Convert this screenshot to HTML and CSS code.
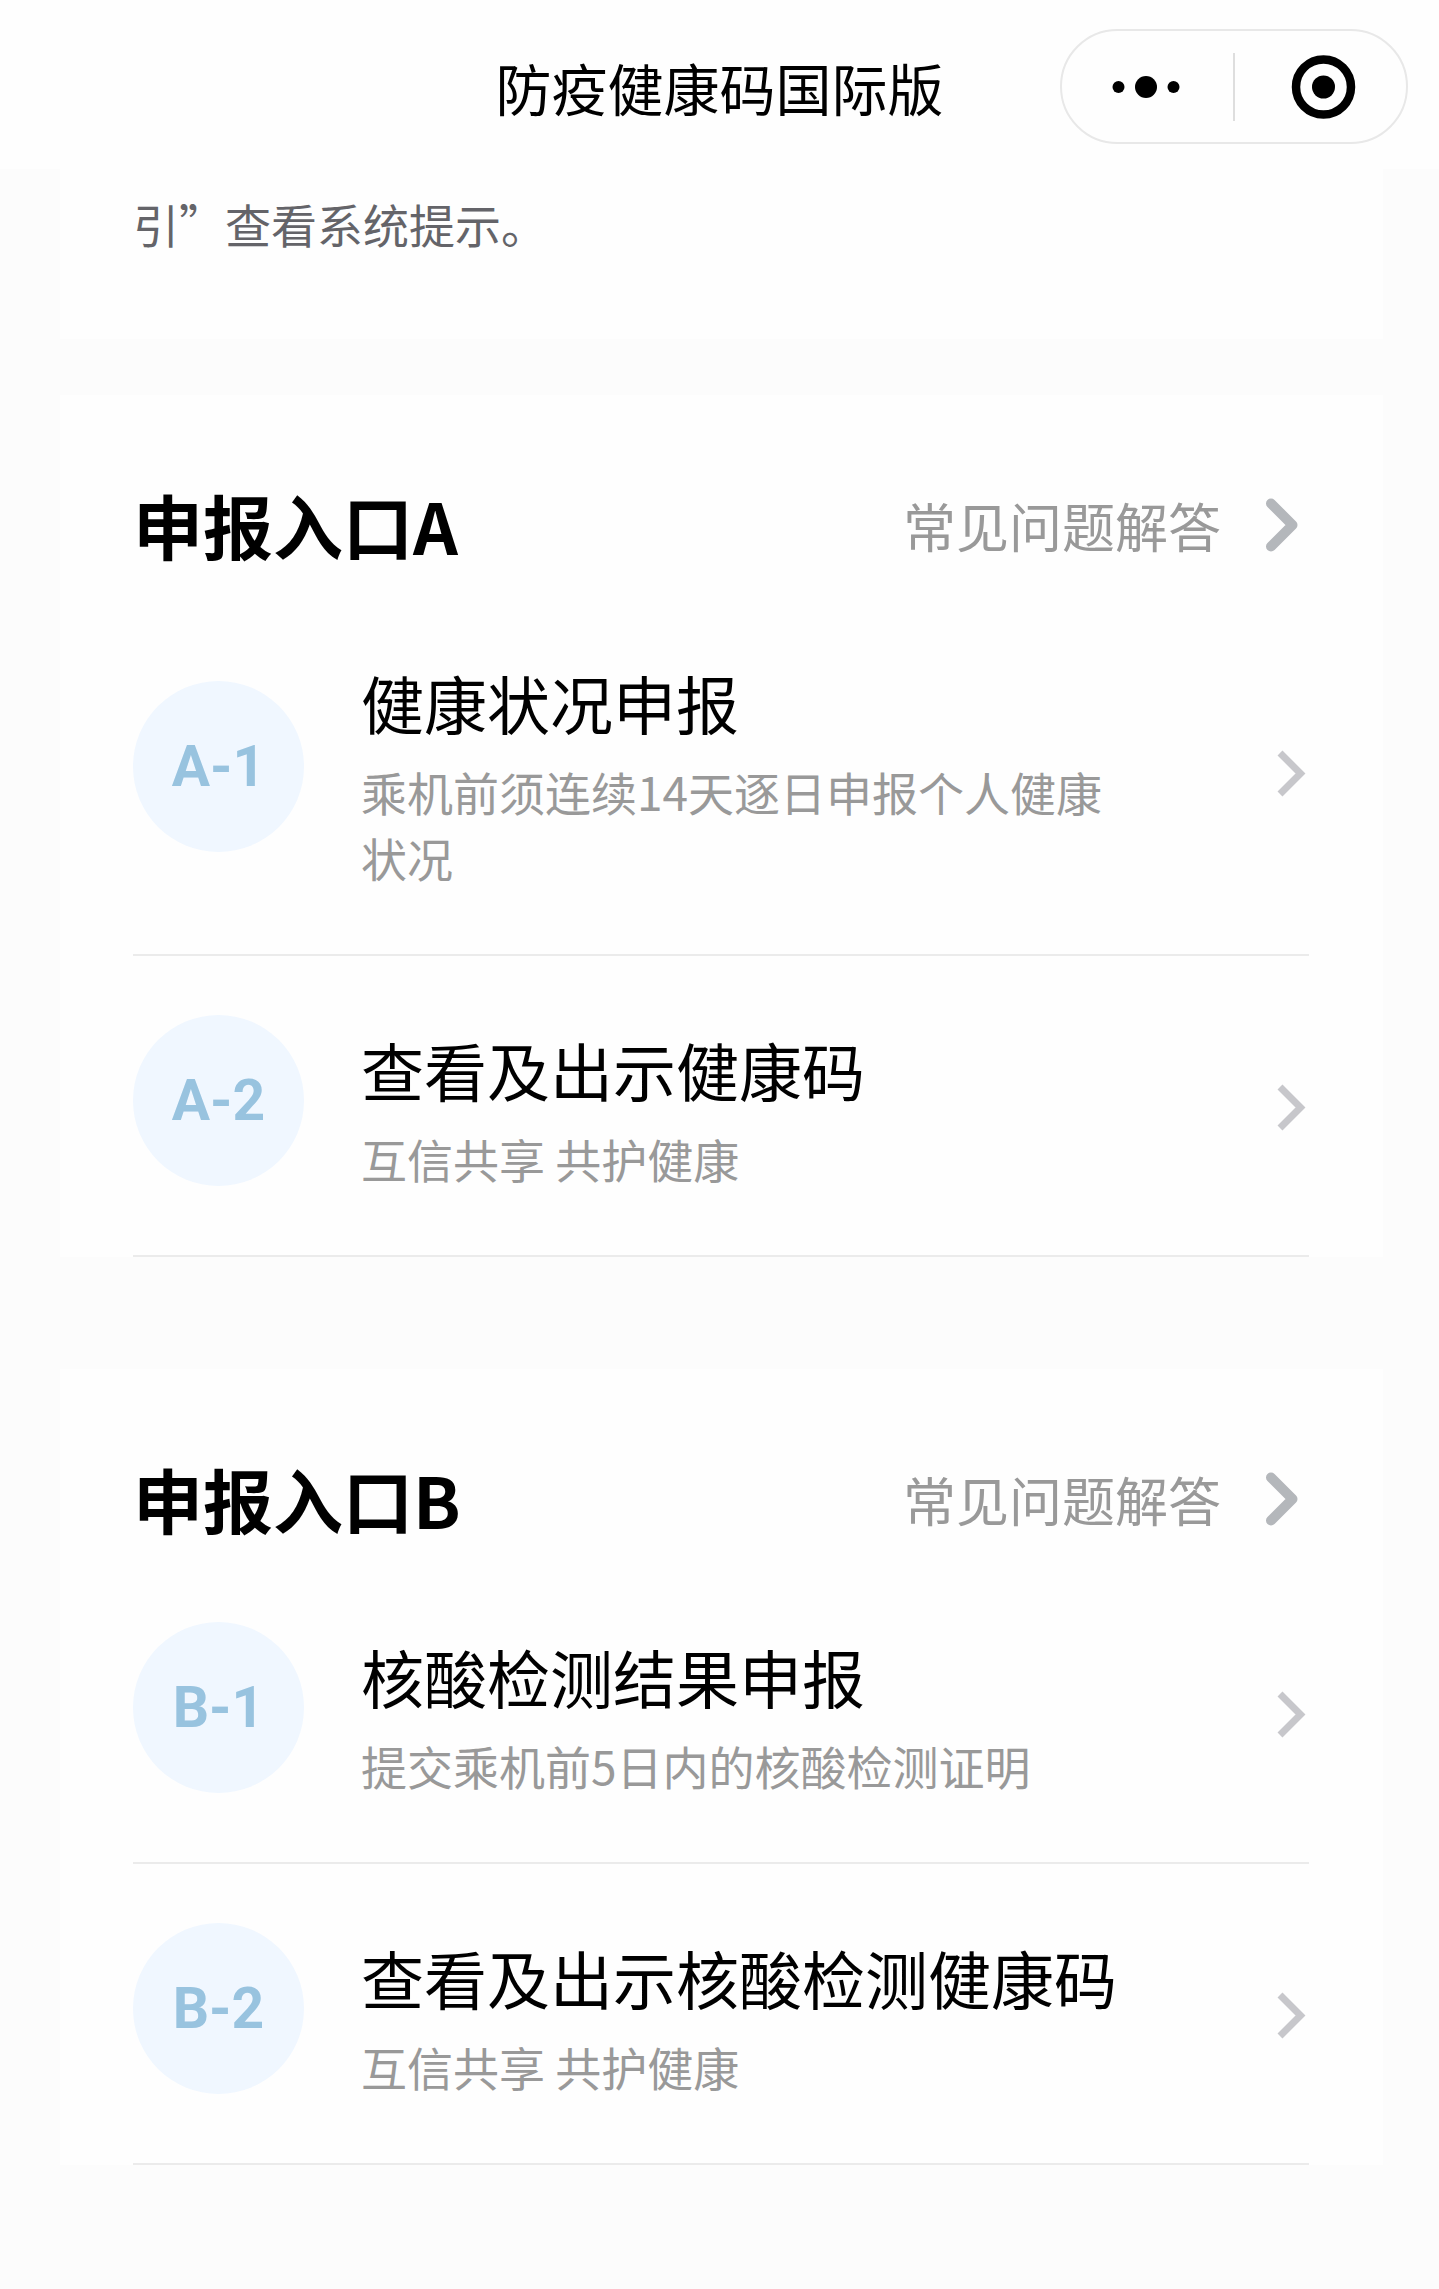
FILE: index.html
```html
<!DOCTYPE html>
<html lang="zh-CN">
<head>
    <meta charset="UTF-8">
    <meta name="viewport" content="width=device-width, initial-scale=1.0">
    <title>防疫健康码国际版</title>
    <link rel="stylesheet" href="styles.css">
</head>
<body>
    <header class="navbar">
        <h1 class="navbar-title">防疫健康码国际版</h1>
        <div class="capsule">
            <button class="capsule-btn" type="button" aria-label="更多">
                <svg width="72" height="72" viewBox="0 0 72 72">
                    <circle cx="6.5" cy="36" r="6"/>
                    <circle cx="34" cy="36" r="11"/>
                    <circle cx="61.5" cy="36" r="6"/>
                </svg>
            </button>
            <span class="capsule-line"></span>
            <button class="capsule-btn" type="button" aria-label="关闭">
                <svg width="72" height="72" viewBox="0 0 72 72">
                    <circle cx="38.5" cy="36" r="27.5" fill="none" stroke="#000" stroke-width="8.5"/>
                    <circle cx="38.5" cy="36" r="11.5"/>
                </svg>
            </button>
        </div>
    </header>

    <main class="content">
        <section class="card notice">
            <p>引”查看系统提示。</p>
        </section>

        <!-- 入口A -->
        <section class="card entry">
            <div class="entry-head">
                <h2>申报入口A</h2>
                <a class="faq" href="#">常见问题解答
                    <svg width="44" height="60" viewBox="0 0 44 60">
                        <path d="M10 8.5 L31.5 30 L10 51.5"/>
                    </svg>
                </a>
            </div>
            <a class="item" href="#">
                <span class="badge">A-1</span>
                <span class="item-text">
                    <span class="item-title">健康状况申报</span>
                    <span class="item-desc">乘机前须连续14天逐日申报个人健康状况</span>
                </span>
                <svg class="arrow" width="30" height="48" viewBox="0 0 30 48">
                    <path d="M4 4 L24.5 24.5 L4 45"/>
                </svg>
            </a>
            <a class="item" href="#">
                <span class="badge">A-2</span>
                <span class="item-text">
                    <span class="item-title">查看及出示健康码</span>
                    <span class="item-desc">互信共享 共护健康</span>
                </span>
                <svg class="arrow" width="30" height="48" viewBox="0 0 30 48">
                    <path d="M4 4 L24.5 24.5 L4 45"/>
                </svg>
            </a>
        </section>

        <!-- 入口B -->
        <section class="card entry">
            <div class="entry-head">
                <h2>申报入口B</h2>
                <a class="faq" href="#">常见问题解答
                    <svg width="44" height="60" viewBox="0 0 44 60">
                        <path d="M10 8.5 L31.5 30 L10 51.5"/>
                    </svg>
                </a>
            </div>
            <a class="item" href="#">
                <span class="badge">B-1</span>
                <span class="item-text">
                    <span class="item-title">核酸检测结果申报</span>
                    <span class="item-desc">提交乘机前5日内的核酸检测证明</span>
                </span>
                <svg class="arrow" width="30" height="48" viewBox="0 0 30 48">
                    <path d="M4 4 L24.5 24.5 L4 45"/>
                </svg>
            </a>
            <a class="item" href="#">
                <span class="badge">B-2</span>
                <span class="item-text">
                    <span class="item-title">查看及出示核酸检测健康码</span>
                    <span class="item-desc">互信共享 共护健康</span>
                </span>
                <svg class="arrow" width="30" height="48" viewBox="0 0 30 48">
                    <path d="M4 4 L24.5 24.5 L4 45"/>
                </svg>
            </a>
        </section>
    </main>
</body>
</html>
```
FILE: styles.css
```css
* {
    box-sizing: border-box;
}

body {
    margin: 0;
    font-family: "Noto Sans CJK SC", sans-serif;
    background-color: #fcfcfc;
    color: #000;
}

h1, h2, p {
    margin: 0;
}

a {
    color: inherit;
    text-decoration: none;
}

/* 顶部导航 */
.navbar {
    display: grid;
    grid-template-columns: 1fr auto 1fr;
    align-items: center;
    padding: 29px 31px 25px;
    background-color: #fefefe;
}

.navbar-title {
    grid-column: 2;
    font-size: 56px;
    font-weight: 400;
    line-height: 84px;
}

.capsule {
    display: flex;
    align-items: center;
    justify-self: end;
    width: 348px;
    height: 115px;
    border: 2px solid #e8e8e8;
    border-radius: 58px;
}

.capsule-btn {
    flex: 1;
    display: flex;
    justify-content: center;
    padding: 0;
    border: none;
    background: none;
    cursor: pointer;
}

.capsule-line {
    width: 2px;
    height: 68px;
    background-color: #dedede;
}

.content {
    padding: 0 56px 56px 60px;
}

.card {
    padding: 0 74px 0 73px;
    background-color: #fefefe;
}

.notice {
    padding-top: 21px;
    padding-bottom: 83px;
    margin-bottom: 56px;
    font-size: 46px;
    line-height: 66px;
    color: #646469;
}

.entry {
    margin-bottom: 112px;
}

.entry:last-child {
    margin-bottom: 0;
}

.entry-head {
    display: flex;
    justify-content: space-between;
    align-items: center;
    padding: 78px 0 12px;
}

.entry-head h2 {
    font-size: 70px;
    font-weight: 700;
    line-height: 104px;
}

.faq {
    display: flex;
    align-items: center;
    gap: 40px;
    padding-right: 4px;
    font-size: 53px;
    color: #999;
}

.faq path {
    fill: none;
    stroke: #b4b7bb;
    stroke-width: 10;
    stroke-linecap: round;
    stroke-linejoin: round;
}

/* 列表项 */
.item {
    display: flex;
    align-items: center;
    padding: 59px 0 57px;
    border-bottom: 2px solid #ebebeb;
}

.badge {
    display: flex;
    justify-content: center;
    align-items: center;
    flex-shrink: 0;
    width: 171px;
    height: 171px;
    margin: 0 57px 12px 0;
    border-radius: 50%;
    background-color: #f0f7ff;
    color: #98c3df;
    font-family: Roboto, sans-serif;
    font-size: 57px;
    font-weight: 700;
}

.item-text {
    flex: 1;
    padding: 7px 0;
    margin-right: 142px;
}

.item-title,
.item-desc {
    display: block;
}

.item-title {
    margin-bottom: 9px;
    font-size: 63px;
    line-height: 94px;
}

.item-desc {
    font-size: 46px;
    line-height: 66px;
    color: #999;
}

.arrow {
    flex-shrink: 0;
    margin-right: 3px;
}

.arrow path {
    fill: none;
    stroke: #c7c7cb;
    stroke-width: 7;
}
```
